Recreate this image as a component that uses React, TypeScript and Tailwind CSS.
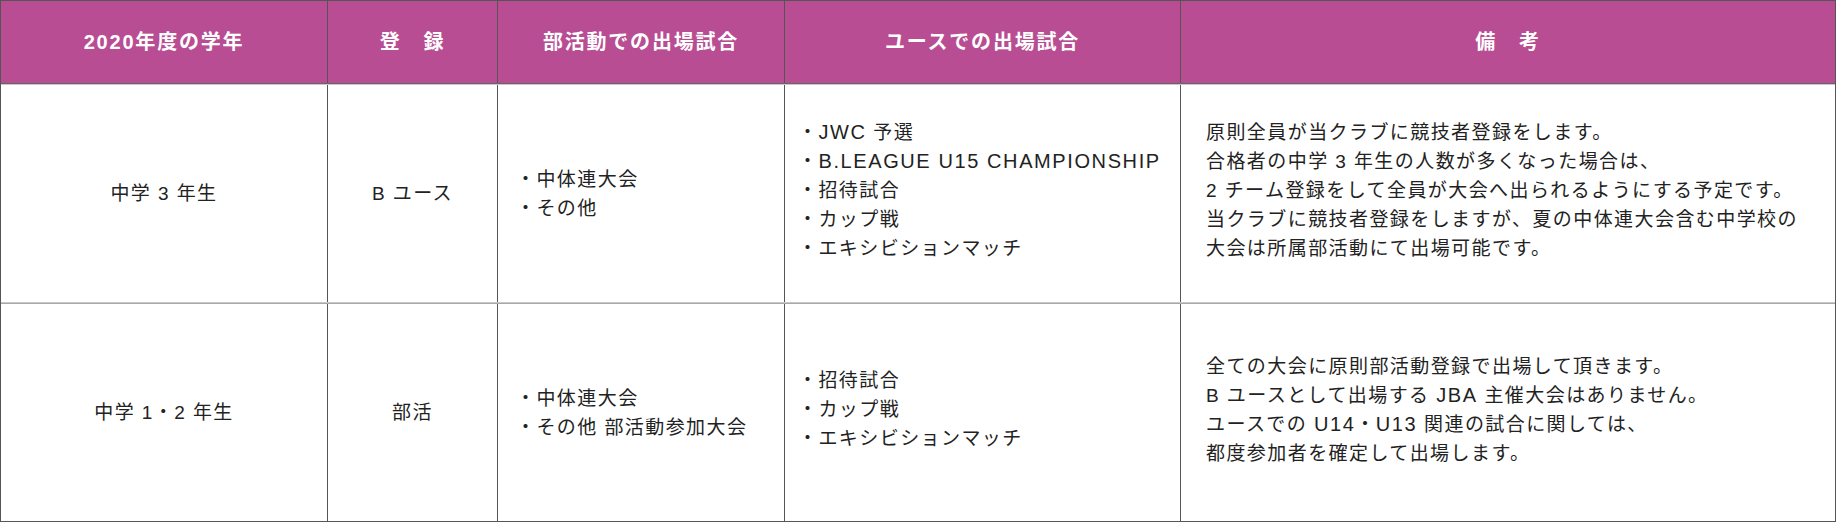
const font = { fontFamily: '"Liberation Sans", "Noto Sans CJK JP", sans-serif' }

interface Row {
  grade: string
  entry: string
  club: string[]
  youth: string[]
  notes: string[]
}

const rows: Row[] = [
  {
    grade: '中学 3 年生',
    entry: 'B ユース',
    club: ['中体連大会', 'その他'],
    youth: ['JWC 予選', 'B.LEAGUE U15 CHAMPIONSHIP', '招待試合', 'カップ戦', 'エキシビションマッチ'],
    notes: [
      '原則全員が当クラブに競技者登録をします。',
      '合格者の中学 3 年生の人数が多くなった場合は、',
      '2 チーム登録をして全員が大会へ出られるようにする予定です。',
      '当クラブに競技者登録をしますが、夏の中体連大会含む中学校の',
      '大会は所属部活動にて出場可能です。',
    ],
  },
  {
    grade: '中学 1・2 年生',
    entry: '部活',
    club: ['中体連大会', 'その他 部活動参加大会'],
    youth: ['招待試合', 'カップ戦', 'エキシビションマッチ'],
    notes: [
      '全ての大会に原則部活動登録で出場して頂きます。',
      'B ユースとして出場する JBA 主催大会はありません。',
      'ユースでの U14・U13 関連の試合に関しては、',
      '都度参加者を確定して出場します。',
    ],
  },
]

const headers = ['2020年度の学年', '登　録', '部活動での出場試合', 'ユースでの出場試合', '備　考']

// latin runs render a touch larger, like the original page's font
function Text({ value }: { value: string }) {
  const parts = value.split(/([A-Z][A-Z0-9. ]*[A-Z0-9])/)
  return (
    <>
      {parts.map((p, i) =>
        i % 2 === 1 ? (
          <span key={i} className="text-[20px] tracking-[0.08em]">
            {p}
          </span>
        ) : (
          p
        ),
      )}
    </>
  )
}

function BulletList({ items }: { items: string[] }) {
  return (
    <ul className="flex flex-col">
      {items.map((item) => (
        <li key={item} className="whitespace-nowrap">
          ・<Text value={item} />
        </li>
      ))}
    </ul>
  )
}

export default function App() {
  const cols = 'grid grid-cols-[327px_170px_287px_396px_1fr]'
  return (
    <div className="w-[1836px] h-[523px] bg-white" style={font}>
      <div className="border border-[#555] text-[19px] tracking-[0.075em] leading-[29px] text-[#222]">
        <div className={`${cols} h-[83px] bg-[#b84d93] border-b border-[#666] text-[20px] tracking-[0.09em] font-bold text-white`}>
          {headers.map((h, i) => (
            <div
              key={h}
              className={`flex items-center justify-center ${i < 4 ? 'border-r border-[#555]' : ''}`}
            >
              {h}
            </div>
          ))}
        </div>
        {rows.map((row, idx) => (
          <div
            key={row.grade}
            className={`${cols} ${
              idx === 0
                ? 'h-[219px] border-t border-[#c8c8c8] border-b border-[#808080]'
                : 'h-[218px] border-t border-[#a8a8a8]'
            }`}
          >
            <div className="flex items-center justify-center border-r border-[#555]">{row.grade}</div>
            <div className="flex items-center justify-center border-r border-[#555]">{row.entry}</div>
            <div className="flex items-center border-r border-[#555] pl-[18px]">
              <BulletList items={row.club} />
            </div>
            <div className="flex items-center border-r border-[#555] pl-[13px] pb-[6px]">
              <BulletList items={row.youth} />
            </div>
            <div className="flex items-center pl-[25px] pb-[6px]">
              <div className="flex flex-col">
                {row.notes.map((n) => (
                  <p key={n} className="whitespace-nowrap">
                    <Text value={n} />
                  </p>
                ))}
              </div>
            </div>
          </div>
        ))}
      </div>
    </div>
  )
}
